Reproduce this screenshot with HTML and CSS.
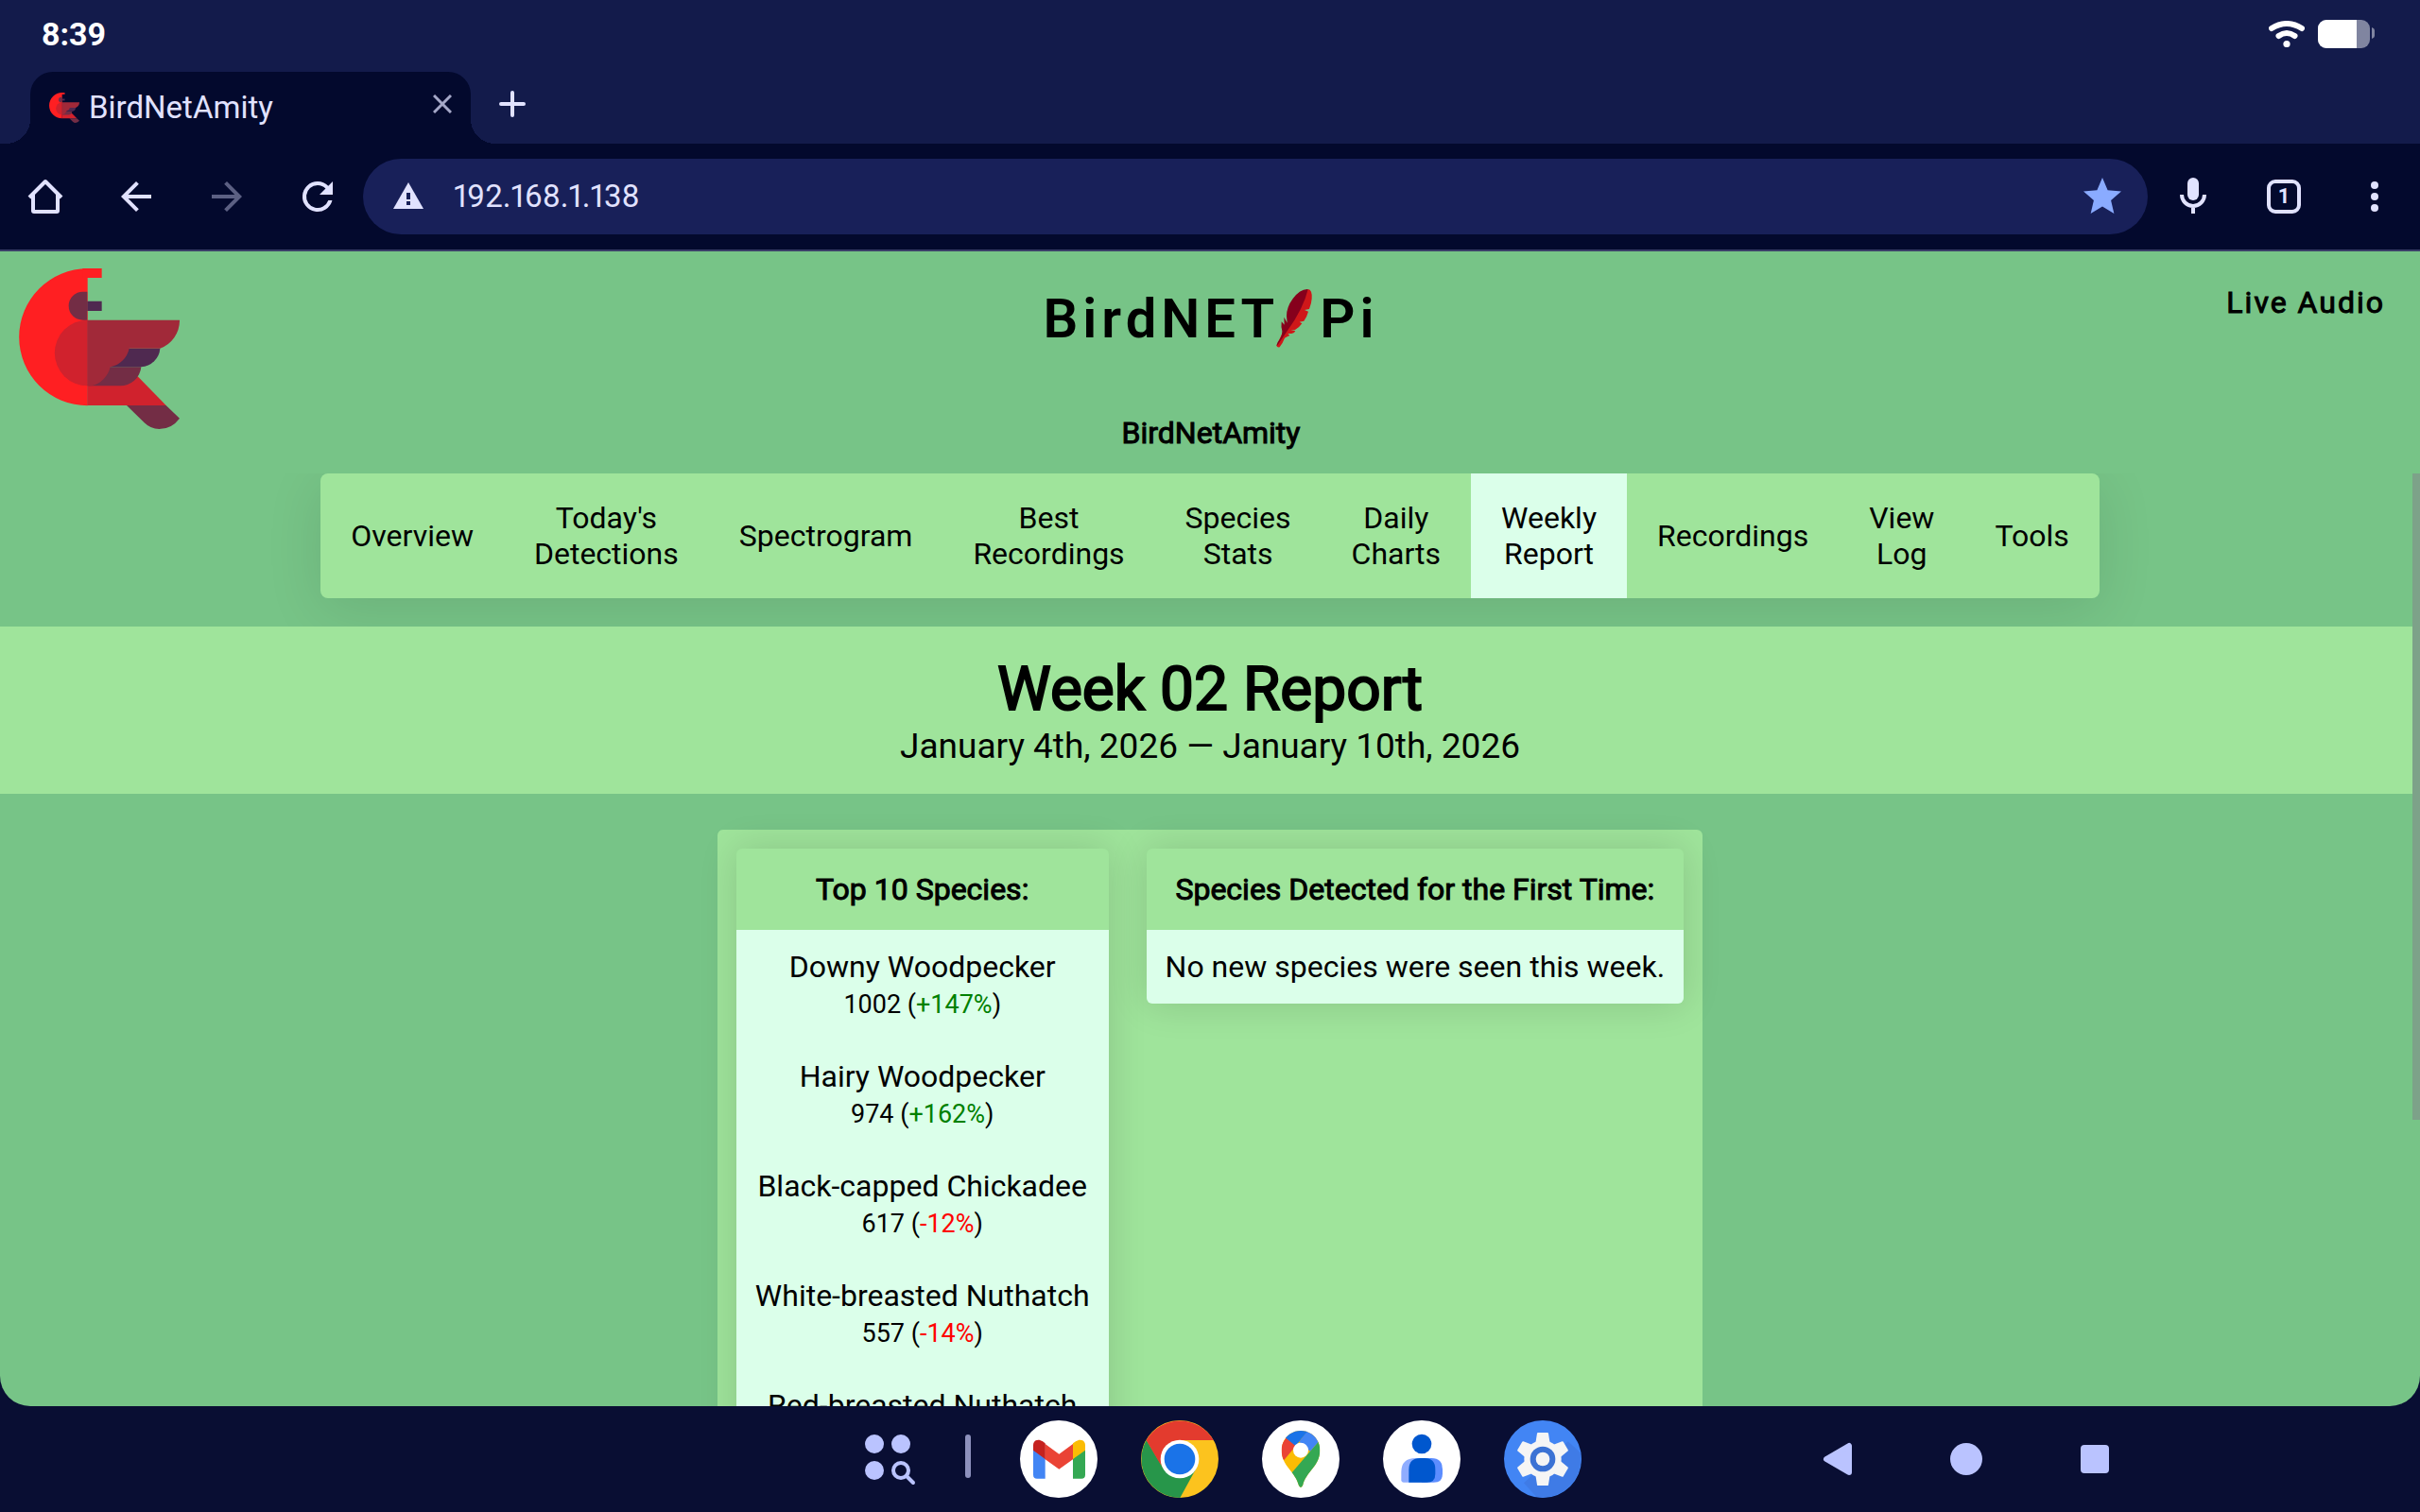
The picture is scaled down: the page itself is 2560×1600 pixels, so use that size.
FILE: index.html
```html
<!DOCTYPE html>
<html lang="en">
<head>
<meta charset="utf-8">
<meta name="viewport" content="width=device-width, initial-scale=1">
<title>BirdNetAmity</title>
<link rel="stylesheet" href="styles.css">
</head>
<body>
<svg class="defs" aria-hidden="true">
  <symbol id="bird" viewBox="60 72 510 510">
    <path fill="#ff1f22" d="M278 72.500A217.500 217.500 0 0 0 278 507.500z"/>
    <path fill="#ff1f22" d="M262 72h61v30h-61z"/>
    <path fill="#732d45" d="M277 146h-14a45 45 0 0 0 0 90h14z"/>
    <path fill="#4f2950" d="M277 176h46v31h-46z"/>
    <path fill="#d0222d" d="M278 236a104 104 0 0 0 0 209z"/>
    <path fill="#d0222d" d="M277 440v67h250l-90-92z"/>
    <path fill="#732d45" d="M340 385h108a66 66 0 0 1-68 60H280z"/>
    <path fill="#4f2950" d="M400 326h108a64 64 0 0 1-60 59H345z"/>
    <path fill="#a12939" d="M277 236h293a94 94 0 0 1-62 90h-98a76 76 0 0 1-60 59 80 80 0 0 1-60 60h-13z"/>
    <path fill="#732d45" d="M402 507h125l43 41Q545 582 505 582 478 582 458 562z"/>
  </symbol>
</svg>

<header class="browser">
  <div class="status">
    <time class="clock">8:39</time>
    <div class="status-icons">
      <svg width="38" height="28" viewBox="0 0 38 28" fill="none" stroke="#fff" stroke-width="6" stroke-linecap="round"><path d="M3 8Q19-2 35 8M10.500 16Q19 10 27.500 16"/><circle cx="19" cy="24.500" r="3.600" fill="#fff" stroke="none"/></svg>
      <svg width="60" height="30" viewBox="0 0 60 30"><rect width="55" height="30" rx="9" fill="#8085a0"/><path fill="#fff" d="M9 0h32v30H9a9 9 0 0 1-9-9V9a9 9 0 0 1 9-9z"/><path fill="#8085a0" d="M57 8q3 1 3 3v6q0 2-3 3z"/></svg>
    </div>
  </div>
  <div class="tabs">
    <div class="tab">
      <svg class="favicon"><use href="#bird"/></svg>
      <span class="tab-title">BirdNetAmity</span>
      <button class="tab-close" aria-label="Close tab"><svg width="20" height="20" viewBox="0 0 20 20" stroke="#a5a8c8" stroke-width="3"><path d="M1 1l18 18M19 1L1 19"/></svg></button>
    </div>
    <button class="new-tab" aria-label="New tab"><svg width="28" height="28" viewBox="0 0 28 28" stroke="#e1e2ff" stroke-width="4" stroke-linecap="round"><path d="M14 2v24M2 14h24"/></svg></button>
  </div>
  <div class="toolbar">
    <button class="tool" aria-label="Home"><svg width="48" height="48" viewBox="0 0 48 48" fill="none" stroke="#e1e2ff" stroke-width="4" stroke-linejoin="round"><path d="M7 25L24 8l17 17M11 22v17q0 1 1 1h24q1 0 1-1V22"/></svg></button>
    <button class="tool" aria-label="Back"><svg width="48" height="48" viewBox="0 0 24 24" fill="#e1e2ff"><path d="M20 11H7.830l5.590-5.590L12 4l-8 8 8 8 1.410-1.410L7.830 13H20z"/></svg></button>
    <button class="tool" aria-label="Forward" disabled><svg width="48" height="48" viewBox="0 0 24 24" fill="#5c6083"><path d="M12 4l-1.410 1.410L16.170 11H4v2h12.170l-5.580 5.590L12 20l8-8z"/></svg></button>
    <button class="tool" aria-label="Reload"><svg width="48" height="48" viewBox="0 0 24 24" fill="#e1e2ff"><path d="M17.650 6.350A7.960 7.960 0 0 0 12 4a8 8 0 1 0 7.730 10h-2.080A6 6 0 1 1 12 6c1.660 0 3.140.690 4.220 1.780L13 11h7V4z"/></svg></button>
    <div class="omnibox">
      <svg class="warn" width="48" height="48" viewBox="0 0 48 48"><path fill="#e1e2ff" d="M24 9l16 28H8z"/><path fill="#182059" d="M22 20h4v7h-4zM22 29h4v4h-4z"/></svg>
      <input class="url" type="text" value="192.168.1.138" aria-label="Address">
      <button class="tool" aria-label="Bookmark"><svg width="48" height="48" viewBox="0 0 24 24" fill="#8aabff"><path d="M12 17.270L18.180 21l-1.640-7.030L22 9.240l-7.190-.610L12 2 9.190 8.630 2 9.240l5.460 4.730L5.820 21z"/></svg></button>
    </div>
    <button class="tool" aria-label="Voice search"><svg width="48" height="48" viewBox="0 0 48 48" fill="none" stroke="#e1e2ff" stroke-width="4"><rect x="18" y="4" width="12" height="24" rx="6" fill="#e1e2ff" stroke="none"/><path d="M12 22a12 12 0 0 0 24 0M24 34v8"/></svg></button>
    <button class="tool" aria-label="Tabs"><span class="tab-count">1</span></button>
    <button class="tool" aria-label="Menu"><svg width="48" height="48" viewBox="0 0 48 48" fill="#e1e2ff"><circle cx="24" cy="12" r="4"/><circle cx="24" cy="24" r="4"/><circle cx="24" cy="36" r="4"/></svg></button>
  </div>
</header>

<main class="page">
  <div class="banner">
    <a class="logo" href="#" aria-label="BirdNET-Pi home"><svg width="170" height="170"><use href="#bird"/></svg></a>
    <div class="brand">
      <h1 class="brand-name"><span>BirdNET</span><svg class="feather" width="40" height="64" viewBox="814 72 120 192"><path fill="#cf1719" d="M918 75q14 2 12 30-1 16-8 33l-15 3 12 5q-4 16-14 30l-14 3 8 5q-8 12-22 20l-14 3h15q-2 7-12 9h-12l6 6q-8 4-16 8-6 16-16 29-8 2-10-5l28-60z"/><path fill="#86001c" d="M918 75q-24-2-48 30-20 27-20 55l2 22-10-18 1 24-9-10q-2 18 2 30 1 12-8 27-8 9-10 19l4-2 30-44q52-72 66-133z"/></svg><span>Pi</span></h1>
      <h2 class="site-name">BirdNetAmity</h2>
    </div>
    <a class="live" href="#">Live Audio</a>
  </div>

  <div class="frame">
    <nav class="views">
      <button>Overview</button>
      <button>Today's<br>Detections</button>
      <button>Spectrogram</button>
      <button>Best<br>Recordings</button>
      <button>Species<br>Stats</button>
      <button>Daily<br>Charts</button>
      <button class="current">Weekly<br>Report</button>
      <button>Recordings</button>
      <button>View<br>Log</button>
      <button>Tools</button>
    </nav>
    <section class="report-head">
      <h2>Week 02 Report</h2>
      <p>January 4th, 2026 — January 10th, 2026</p>
    </section>
    <section class="report">
      <table>
        <thead><tr><th>Top 10 Species:</th></tr></thead>
        <tbody>
          <tr><td>Downy Woodpecker<br><small>1002 (<span class="up">+147%</span>)</small></td></tr>
          <tr><td>Hairy Woodpecker<br><small>974 (<span class="up">+162%</span>)</small></td></tr>
          <tr><td>Black-capped Chickadee<br><small>617 (<span class="down">-12%</span>)</small></td></tr>
          <tr><td>White-breasted Nuthatch<br><small>557 (<span class="down">-14%</span>)</small></td></tr>
          <tr><td>Red-breasted Nuthatch</td></tr>
        </tbody>
      </table>
      <table>
        <thead><tr><th>Species Detected for the First Time:</th></tr></thead>
        <tbody><tr><td>No new species were seen this week.</td></tr></tbody>
      </table>
    </section>
    <div class="thumb"></div>
  </div>
</main>

<footer class="taskbar">
  <div class="dock">
    <button class="apps" aria-label="All apps"><svg width="56" height="56" viewBox="0 0 56 56" fill="#bac3ff"><circle cx="12" cy="12" r="10"/><circle cx="40" cy="12" r="10"/><circle cx="12" cy="40" r="10"/><g fill="none" stroke="#bac3ff" stroke-width="4"><circle cx="40" cy="40" r="8"/><path d="M46 46l7 7" stroke-linecap="round"/></g></svg></button>
    <span class="divider"></span>
    <button class="app" aria-label="Gmail"><svg viewBox="0 0 246 246"><circle cx="123" cy="123" r="123" fill="#fff"/><path fill="#4285f4" d="M42 90v83q0 12 12 12h26V120z"/><path fill="#34a853" d="M168 120v65h27q12 0 12-12V90z"/><path fill="#ea4335" d="M79 74l45 33 45-33v49l-45 32-45-32z"/><path fill="#c5221f" d="M42 95V79c0-17 17-22 30-12l8 6v50z"/><path fill="#fbbc04" d="M207 95V79c0-17-17-22-30-12l-9 6v50z"/></svg></button>
    <button class="app" aria-label="Chrome"><svg viewBox="0 0 246 246"><circle cx="123" cy="123" r="123" fill="#fcc31e"/><path fill="#e33b2e" d="M17 63A123 123 0 0 1 230 63H123L71 153z"/><path fill="#27964a" d="M17 63A123 123 0 0 0 124 246L175 153 71 153z"/><path fill="#e33b2e" d="M17 63h106v60H62v17z"/><circle cx="123" cy="123" r="61" fill="#fff"/><circle cx="123" cy="123" r="49" fill="#1a73e8"/></svg></button>
    <button class="app" aria-label="Maps"><svg viewBox="0 0 246 246"><defs><clipPath id="pin"><path d="M123 33c34 0 61 27 61 62 0 50-46 70-54 110q-3 8-7 8t-7-8C108 165 62 145 62 95c0-35 27-62 61-62z"/></clipPath></defs><circle cx="123" cy="123" r="123" fill="#fff"/><g clip-path="url(#pin)"><path fill="#fbbc04" d="M50 20h150v200H50z"/><path fill="#34a853" d="M190 55L90 172l20 50h90z"/><path fill="#4285f4" d="M143 34l50-4-7 30-33 38-35-30z"/><path fill="#1a73e8" d="M70 52L100 20h55l-15 20-37 46z"/><path fill="#ea4335" d="M76 56l31 26-37 44-30-20z"/></g><circle cx="123" cy="95" r="24" fill="#fff"/></svg></button>
    <button class="app" aria-label="Contacts"><svg viewBox="0 0 246 246"><circle cx="123" cy="123" r="123" fill="#fff"/><path fill="#8fadff" d="M58 190v-26q0-44 46-44h30v77H65q-7 0-7-7z"/><path fill="#5c8dff" d="M123 120h31q35 0 35 36v14q0 27-28 27h-38z"/><path fill="#0057ce" d="M82 197v-40q0-37 36-37h14q34 0 34 36v14q0 27-27 27z"/><circle cx="123" cy="75" r="31" fill="#0057ce"/></svg></button>
    <button class="app" aria-label="Settings"><svg viewBox="-123 -123 246 246"><circle r="123" fill="#4285f4"/><path fill="#3f7be6" d="M80-56L120-20A123 123 0 0 1-20 120L-60 76z"/><g fill="#f5f5f5" stroke="#f5f5f5" stroke-width="6" stroke-linejoin="round"><circle r="56"/><path id="tooth" d="M-15-81h30L20-50h-40z"/><use href="#tooth" transform="rotate(60)"/><use href="#tooth" transform="rotate(120)"/><use href="#tooth" transform="rotate(180)"/><use href="#tooth" transform="rotate(240)"/><use href="#tooth" transform="rotate(300)"/></g><circle r="40" fill="#3b72d4"/><circle r="22" fill="#f5f5f5"/></svg></button>
  </div>
  <div class="sysnav">
    <button aria-label="Back"><svg width="36" height="36" viewBox="0 0 36 36" fill="#bac3ff" stroke="#bac3ff" stroke-width="6" stroke-linejoin="round"><path d="M6 18L30 4v28z"/></svg></button>
    <button aria-label="Home"><svg width="36" height="36" viewBox="0 0 36 36" fill="#bac3ff"><circle cx="18" cy="18" r="17"/></svg></button>
    <button aria-label="Recents"><svg width="36" height="36" viewBox="0 0 36 36" fill="#bac3ff"><rect x="3" y="3" width="30" height="30" rx="4"/></svg></button>
  </div>
</footer>
</body>
</html>
```

FILE: styles.css
```css
* { box-sizing: border-box; }

body {
  margin: 0;
  height: 100vh;
  display: flex;
  flex-direction: column;
  overflow: hidden;
  background: #090e33;
  color: #000;
  font-family: Roboto, "Liberation Sans", sans-serif;
  font-size: 32px;
  line-height: 38px;
}

button {
  padding: 0;
  border: 0;
  background: none;
  color: inherit;
  font: inherit;
}

a { color: inherit; text-decoration: none; }
h1, h2, p { margin: 0; }
svg { display: block; }
.defs { display: none; }

/* Browser chrome */
.browser {
  flex: none;
  background: #131b4b;
  color: #e1e2ff;
}

.status {
  display: flex;
  justify-content: space-between;
  align-items: center;
  height: 76px;
  padding: 0 48px 4px 44px;
}

.clock {
  color: #fff;
  font-size: 34px;
  font-weight: 700;
}

.status-icons {
  display: flex;
  align-items: center;
  gap: 14px;
}

.tabs {
  display: flex;
  height: 76px;
  padding-left: 32px;
}

.tab {
  position: relative;
  display: flex;
  align-items: center;
  width: 466px;
  padding: 0 20px;
  border-radius: 24px 24px 0 0;
  background: #03092d;
}

.tab::before,
.tab::after {
  content: "";
  position: absolute;
  bottom: 0;
  width: 26px;
  height: 26px;
}

.tab::before {
  right: 100%;
  background: radial-gradient(circle at 0 0, transparent 26px, #03092d 26px);
}

.tab::after {
  left: 100%;
  background: radial-gradient(circle at 100% 0, transparent 26px, #03092d 26px);
}

.favicon { width: 32px; height: 32px; }

.tab-title {
  flex: 1;
  margin-left: 10px;
  font-size: 33px;
}

.tab-close { padding-bottom: 8px; }

.new-tab {
  display: flex;
  align-items: center;
  justify-content: center;
  width: 88px;
  padding-bottom: 8px;
}

.toolbar {
  display: flex;
  align-items: center;
  height: 114px;
  border-bottom: 2px solid #3b3f68;
  background: #03092d;
}

.tool {
  display: flex;
  flex: none;
  align-items: center;
  justify-content: center;
  width: 96px;
  height: 80px;
}

.omnibox {
  display: flex;
  flex: 1;
  align-items: center;
  height: 80px;
  padding-left: 24px;
  border-radius: 40px;
  background: #182059;
}

.url {
  flex: 1;
  min-width: 0;
  margin-left: 24px;
  padding: 0;
  border: 0;
  outline: 0;
  background: none;
  color: #e1e2ff;
  font: inherit;
  font-size: 33px;
  font-variant-numeric: proportional-nums;
}

.tab-count {
  width: 36px;
  height: 36px;
  border: 4px solid #e1e2ff;
  border-radius: 9px;
  font-size: 22px;
  font-weight: 700;
  line-height: 28px;
}

/* BirdNET-Pi page */
.page {
  flex: 1;
  min-height: 0;
  display: flex;
  flex-direction: column;
  overflow: hidden;
  border-radius: 0 0 32px 32px;
  background: #77c487;
}

.banner {
  display: grid;
  flex: none;
  grid-template-columns: 1fr auto 1fr;
  height: 235px;
  padding: 18px 37px 0 20px;
}

.brand {
  display: flex;
  flex-direction: column;
  align-items: center;
  justify-content: space-between;
  padding: 16px 0 24px 19px;
}

.brand-name {
  display: flex;
  align-items: center;
  font-size: 58px;
  font-weight: 600;
  letter-spacing: 5px;
  line-height: 74px;
}

.feather { margin: 0 7px 0 -4px; }

.site-name,
.live,
.report-head h2,
th {
  font-weight: 400;
  -webkit-text-stroke: 1px #000;
}

.site-name { font-size: 32px; }

.live {
  justify-self: end;
  padding-top: 17px;
  letter-spacing: 2px;
}

.frame {
  position: relative;
  display: flex;
  flex: 1;
  flex-direction: column;
  min-height: 0;
  overflow: hidden;
}

.views {
  display: flex;
  flex: none;
  align-self: center;
  height: 132px;
  margin-bottom: 30px;
  border-radius: 8px;
  background: #9fe49b;
  box-shadow: 0 12px 60px rgba(0, 0, 0, 0.1);
}

.views button { padding: 0 32px; }
.views .current { background: #dbffea; }

.report-head {
  position: relative;
  flex: none;
  height: 177px;
  padding: 28px 0;
  background: #9fe49b;
  text-align: center;
}

.report-head h2 {
  font-size: 64px;
  line-height: 78px;
  -webkit-text-stroke-width: 2px;
}

.report-head p {
  font-size: 37px;
  line-height: 42px;
}

.report {
  display: flex;
  flex: 1;
  align-items: flex-start;
  align-self: center;
  gap: 40px;
  margin-top: 38px;
  padding: 20px;
  border-radius: 6px 6px 0 0;
  background: #9fe49b;
}

.report table {
  border-radius: 6px;
  border-spacing: 0;
  overflow: hidden;
  background: #9fe49b;
  box-shadow: 0 0 40px rgba(0, 0, 0, 0.14);
  text-align: center;
}

th { padding: 24px 20px; }

td {
  padding: 20px;
  background: #dbffea;
}

small { font-size: 27px; line-height: 30px; }
.up { color: #008000; }
.down { color: #f00; }

.thumb {
  position: absolute;
  top: 0;
  right: 0;
  width: 8px;
  height: 684px;
  background: #7da289;
}

/* Tablet taskbar */
.taskbar {
  display: grid;
  flex: none;
  grid-template-columns: 1fr auto 1fr;
  align-items: center;
  height: 112px;
}

.dock {
  display: flex;
  grid-column: 2;
  align-items: center;
}

.apps {
  display: flex;
  justify-content: center;
  width: 154px;
}

.divider {
  width: 6px;
  height: 46px;
  margin: 0 29px 6px 3px;
  border-radius: 3px;
  background: #8d91bd;
}

.app {
  display: flex;
  justify-content: center;
  width: 128px;
}

.app svg { width: 82px; height: 82px; }

.sysnav {
  display: flex;
  padding-left: 180px;
}

.sysnav button {
  display: flex;
  justify-content: center;
  width: 136px;
}
```
